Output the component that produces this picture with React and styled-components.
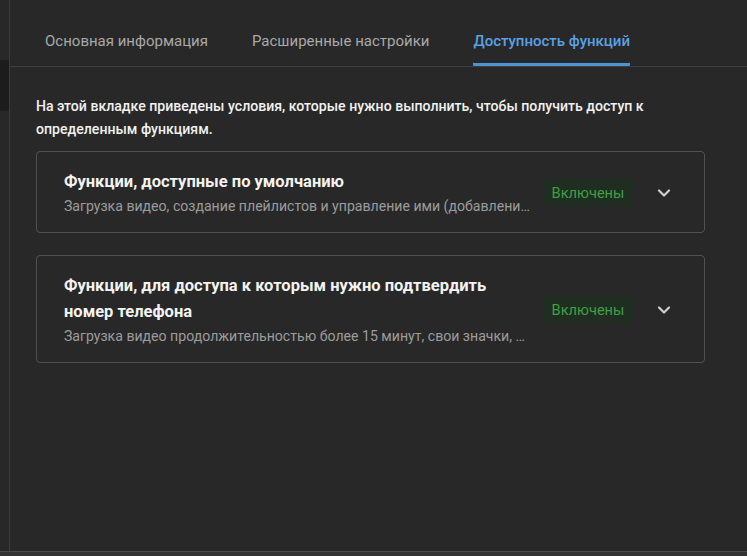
import React from "react";
import styled, { createGlobalStyle } from "styled-components";

const GlobalStyle = createGlobalStyle`
  html, body {
    margin: 0;
    padding: 0;
    background: #282828;
  }
  body {
    font-family: Roboto, "Noto Sans", Arial, sans-serif;
  }
`;

const tabs = ["Основная информация", "Расширенные настройки", "Доступность функций"];

const features = [
  {
    title: "Функции, доступные по умолчанию",
    text: "Загрузка видео, создание плейлистов и управление ими (добавление и удаление видео)",
  },
  {
    title: "Функции, для доступа к которым нужно подтвердить номер телефона",
    text: "Загрузка видео продолжительностью более 15 минут, свои значки, трансляции и многое другое",
  },
];

function Chevron() {
  return (
    <svg width="24" height="24" viewBox="0 0 24 24" fill="none">
      <path d="M7 9.5l5 5 5-5" stroke="#cfcfcf" strokeWidth="2.2" strokeLinecap="round" strokeLinejoin="round" />
    </svg>
  );
}

function FeatureCard({ title, text }) {
  return (
    <StCard>
      <StCardBody>
        <StCardTitle>{title}</StCardTitle>
        <StCardText>{text}</StCardText>
      </StCardBody>
      <StBadge>Включены</StBadge>
      <StToggle>
        <Chevron />
      </StToggle>
    </StCard>
  );
}

export default function App() {
  return (
    <>
      <GlobalStyle />
      <StPage>
        <StSidebar>
          <StSideBlock />
        </StSidebar>
        <StMain>
          <StTabBar>
            {tabs.map((t, i) => (
              <StTab key={t} active={i === 2}>
                {t}
              </StTab>
            ))}
          </StTabBar>
          <StContent>
            <StIntro>
              На этой вкладке приведены условия, которые нужно выполнить, чтобы получить доступ к
              определенным функциям.
            </StIntro>
            <StCardList>
              {features.map((f) => (
                <FeatureCard key={f.title} {...f} />
              ))}
            </StCardList>
          </StContent>
        </StMain>
      </StPage>
      <StFooter />
    </>
  );
}

const StPage = styled.div`
  display: flex;
  height: 552px;
  background: #282828;
  border-bottom: 1px solid #4a4a4a;
  box-sizing: border-box;
`;

const StSidebar = styled.div`
  width: 9px;
  flex-shrink: 0;
  border-right: 1px solid #3c3c3c;
  padding-top: 60px;
`;

const StSideBlock = styled.div`
  height: 51px;
  background: #1c1c1c;
`;

const StMain = styled.div`
  flex: 1;
  min-width: 0;
  display: flex;
  flex-direction: column;
`;

const StTabBar = styled.div`
  display: flex;
  height: 67px;
  align-items: stretch;
  padding-left: 35px;
  border-bottom: 1px solid #3e3e3e;
  box-sizing: border-box;
  gap: 44px;
`;

const StTab = styled.div`
  display: flex;
  align-items: center;
  padding-top: 15px;
  font-size: 15px;
  color: ${({ active }) => (active ? "#5aa1e3" : "#a9a9a9")};
  font-weight: ${({ active }) => (active ? 500 : 400)};
  box-shadow: ${({ active }) => (active ? "inset 0 -3px 0 #4b95d6" : "none")};
  border-radius: 0 0 1px 1px;
`;

const StContent = styled.div`
  padding: 28px 42px 0 26px;
`;

const StIntro = styled.p`
  margin: 0 0 10px;
  max-width: 620px;
  font-size: 14.1px;
  font-weight: 500;
  line-height: 23px;
  color: #f1f1f1;
`;

const StCardList = styled.div`
  display: flex;
  flex-direction: column;
  gap: 22px;
`;

const StCard = styled.div`
  display: flex;
  align-items: center;
  border: 1px solid #515151;
  border-radius: 4px;
  padding: 16px 28px 15px 27px;
`;

const StCardBody = styled.div`
  flex: 1;
  min-width: 0;
  padding-right: 12px;
`;

const StCardTitle = styled.div`
  font-size: 16.5px;
  font-weight: 700;
  line-height: 26px;
  color: #f3f3f3;
  max-width: 440px;
  margin-top: 1px;
`;

const StCardText = styled.div`
  font-size: 14.1px;
  line-height: 22px;
  color: #9c9c9c;
  white-space: nowrap;
  overflow: hidden;
  text-overflow: ellipsis;
`;

const StBadge = styled.div`
  flex-shrink: 0;
  width: 90px;
  height: 27px;
  display: flex;
  align-items: center;
  justify-content: center;
  background: #1f2e20;
  color: #3e9f45;
  font-size: 14.6px;
`;

const StToggle = styled.div`
  flex-shrink: 0;
  margin-left: 19px;
  display: flex;
`;

const StFooter = styled.div`
  height: 4px;
  background: #333333;
`;
